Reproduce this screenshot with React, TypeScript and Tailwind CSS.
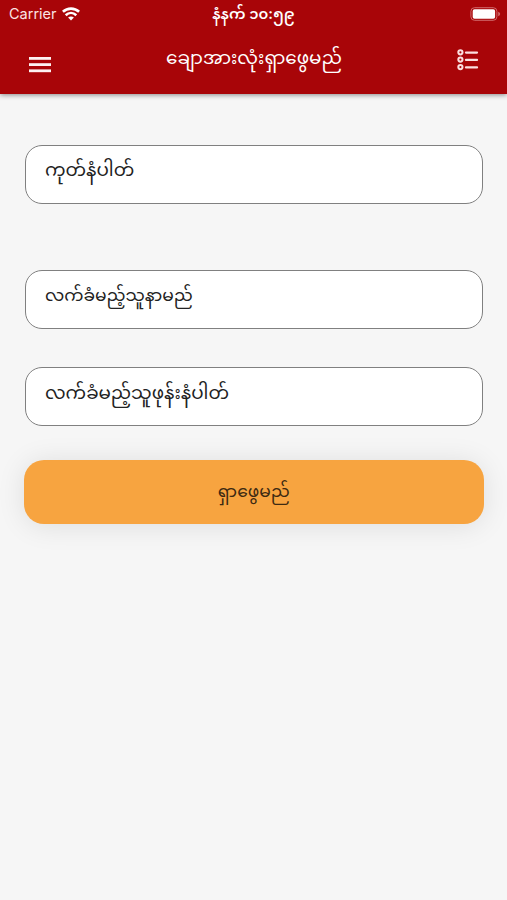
import { Fragment } from "react";

const WifiIcon = () => (
  <svg viewBox="0 0 18 14" className="h-[14px] w-[18px]" fill="none" stroke="white" strokeWidth="2.6">
    <path d="M0.9 4.8 C5.5 0.5 12.5 0.5 17.1 4.8" />
    <path d="M3.7 8.2 C6.8 5.3 11.2 5.3 14.3 8.2" />
    <path d="M6.1 10.6 C7.8 9 10.2 9 11.9 10.6 L9 13.6 Z" fill="white" stroke="none" />
  </svg>
);

const BatteryIcon = () => (
  <svg viewBox="0 0 31 14" className="h-[14px] w-[31px]">
    <rect x="0.9" y="0.7" width="26" height="12.6" rx="3.6" fill="none" stroke="#d06a6c" strokeWidth="1" />
    <rect x="2.7" y="2.3" width="22.4" height="9.4" rx="1.8" fill="white" />
    <path d="M28.2 4.8 C30.8 5.6 30.8 8.4 28.2 9.2 Z" fill="#d06a6c" />
  </svg>
);

const MenuIcon = () => (
  <svg viewBox="0 0 22 16" className="h-4 w-[22px]" fill="#fdf1f1">
    <rect y="0" width="22" height="2.8" />
    <rect y="6.2" width="22" height="2.8" />
    <rect y="12.4" width="22" height="2.8" />
  </svg>
);

const ListIcon = () => (
  <svg viewBox="0 0 22 22" className="h-[22px] w-[22px]" fill="none" stroke="#fbdfdf" strokeLinecap="round">
    {[3.3, 10.6, 18.1].map((y) => (
      <Fragment key={y}>
        <circle cx="3.4" cy={y} r="2.1" strokeWidth="2" />
        <path d={`M9 ${y + 0.3}H20`} strokeWidth="2.3" />
      </Fragment>
    ))}
  </svg>
);

const Field = ({ label, className = "" }: { label: string; className?: string }) => (
  <div
    className={`h-[59px] rounded-[17px] border border-[#808080] bg-white pl-[19px] leading-8 whitespace-nowrap text-[#222] ${className}`}
  >
    {label}
  </div>
);

export default function App() {
  return (
    <div className="h-[900px] w-full overflow-hidden bg-[#f6f6f6] font-['Inter','Noto_Sans_Myanmar','Padauk',sans-serif]">
      <header className="h-[94px] bg-[#a80508] text-white shadow-[0_1px_5px_rgba(0,0,0,0.45)]">
        <div className="grid h-7 grid-cols-3 items-center pr-1.5 pl-[9px]">
          <div className="flex items-center gap-[5px] text-[14.5px] text-[#fbe3e3]">
            Carrier
            <WifiIcon />
          </div>
          <div className="pr-[3px] text-center text-[14.8px] leading-7 font-semibold whitespace-nowrap">နံနက် ၁၀:၅၉</div>
          <div className="flex justify-end">
            <BatteryIcon />
          </div>
        </div>
        <div className="flex h-[66px] items-start justify-between pr-7 pl-[29px]">
          <div className="pt-[29px]">
            <MenuIcon />
          </div>
          <h1 className="pt-[13px] text-[18.4px] leading-8 whitespace-nowrap">ချောအားလုံးရှာဖွေမည်</h1>
          <div className="pt-[21px]">
            <ListIcon />
          </div>
        </div>
      </header>
      <main className="flex flex-col pt-[51px] pr-[23.5px] pl-6">
        <Field label="ကုတ်နံပါတ်" className="mx-px pt-[7px] text-[18.3px]" />
        <Field label="လက်ခံမည့်သူနာမည်" className="mx-px mt-[66px] pt-2 text-[17.1px]" />
        <Field label="လက်ခံမည့်သူဖုန်းနံပါတ်" className="mx-px mt-[38px] pt-2 text-[18.3px]" />
        <button className="mt-[34px] h-[63.5px] rounded-[20px] bg-[#f7a440] pb-0.5 text-[17.1px] whitespace-nowrap text-[#3d2a12] shadow-[0_2px_28px_rgba(0,0,0,0.1)]">
          ရှာဖွေမည်
        </button>
      </main>
    </div>
  );
}
